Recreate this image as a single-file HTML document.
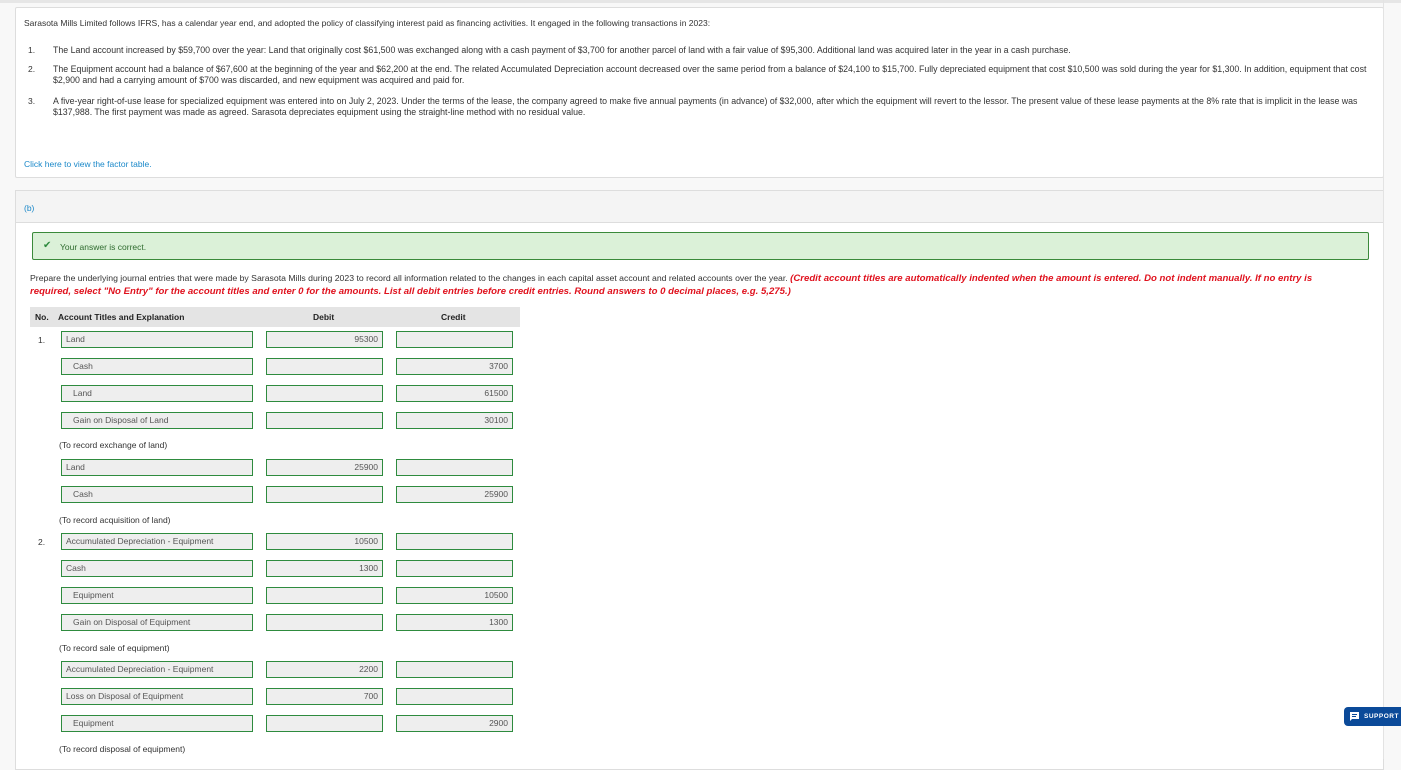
<!DOCTYPE html>
<html><head><meta charset="utf-8"><style>
*{box-sizing:border-box;margin:0;padding:0}
body{width:1401px;height:759px;overflow:hidden;background:#f8f8f8;font-family:"Liberation Sans",sans-serif;color:#333;position:relative;font-size:8.5px}
.top{position:absolute;left:0;top:0;width:1401px;height:3px;background:#e6e6e6}
.p1{position:absolute;left:15px;top:7px;width:1369px;height:171px;background:#fff;border:1px solid #ddd;border-radius:2px}
.p2{position:absolute;left:15px;top:190px;width:1369px;height:580px;background:#fff;border:1px solid #ddd}
.abs{position:absolute;white-space:nowrap}
.hd{position:absolute;left:0;top:0;width:100%;height:32px;background:#f4f4f4;border-bottom:1px solid #ddd}
.ok{position:absolute;left:16px;top:41px;width:1337px;height:28px;background:#dbf1d8;border:1px solid #3a8a3a;border-radius:2px}
.in{position:absolute;height:17px;border:1px solid #2e8b3e;background:#eee;font-size:8.5px;color:#555;line-height:15px;padding:0 4px}
.r{text-align:right}
.red{color:#e0121e;font-weight:bold;font-style:italic;font-size:9.6px}
.sup{position:absolute;left:1344px;top:707px;width:57px;height:19px;background:#0b4a99;border-radius:4px 0 0 4px;color:#fff;font-size:6.5px;font-weight:bold;letter-spacing:.5px;line-height:19px;padding-left:20px}
.vl{position:absolute;left:1383px;top:0;width:1px;height:759px;background:#e3e3e3}
.li{font-size:8.8px}
</style></head><body>
<div class="top"></div>
<div class="p1">
<div class="abs" style="left:8px;top:10px">Sarasota Mills Limited follows IFRS, has a calendar year end, and adopted the policy of classifying interest paid as financing activities. It engaged in the following transactions in 2023:</div>
<div class="abs" style="left:12px;top:37px">1.</div>
<div class="abs li" style="left:37px;top:37px">The Land account increased by $59,700 over the year: Land that originally cost $61,500 was exchanged along with a cash payment of $3,700 for another parcel of land with a fair value of $95,300. Additional land was acquired later in the year in a cash purchase.</div>
<div class="abs" style="left:12px;top:56px">2.</div>
<div class="abs li" style="left:37px;top:56px;line-height:11px">The Equipment account had a balance of $67,600 at the beginning of the year and $62,200 at the end. The related Accumulated Depreciation account decreased over the same period from a balance of $24,100 to $15,700. Fully depreciated equipment that cost $10,500 was sold during the year for $1,300. In addition, equipment that cost<br>$2,900 and had a carrying amount of $700 was discarded, and new equipment was acquired and paid for.</div>
<div class="abs" style="left:12px;top:88px">3.</div>
<div class="abs li" style="left:37px;top:88px;line-height:11px">A five-year right-of-use lease for specialized equipment was entered into on July 2, 2023. Under the terms of the lease, the company agreed to make five annual payments (in advance) of $32,000, after which the equipment will revert to the lessor. The present value of these lease payments at the 8% rate that is implicit in the lease was<br>$137,988. The first payment was made as agreed. Sarasota depreciates equipment using the straight-line method with no residual value.</div>
<div class="abs" style="left:8px;top:151px;color:#1a88c9">Click here to view the factor table.</div>
</div>
<div class="p2">
<div class="hd"><div class="abs" style="left:8px;top:12px;color:#1a88c9">(b)</div></div>
<div class="ok"><div class="abs" style="left:10px;top:7px;color:#2e8b3e;font-size:10px">✔</div><div class="abs" style="left:27px;top:9px;color:#2e6b2e">Your answer is correct.</div></div>
<div class="abs" style="left:14px;top:81px;line-height:12px;font-size:8.7px">Prepare the underlying journal entries that were made by Sarasota Mills during 2023 to record all information related to the changes in each capital asset account and related accounts over the year. <span class="red">(Credit account titles are automatically indented when the amount is entered. Do not indent manually. If no entry is</span><br><span class="red">required, select "No Entry" for the account titles and enter 0 for the amounts. List all debit entries before credit entries. Round answers to 0 decimal places, e.g. 5,275.)</span></div>
<div class="abs" style="left:14px;top:116px;width:490px;height:20px;background:#e4e4e4;font-weight:bold;font-size:8.5px;line-height:20px;color:#222">
<span class="abs" style="left:5px">No.</span><span class="abs" style="left:28px">Account Titles and Explanation</span><span class="abs" style="left:283px">Debit</span><span class="abs" style="left:411px">Credit</span></div>
</div>
<div class="abs" style="left:38px;top:335px">1.</div>
<div class="abs" style="left:38px;top:537px">2.</div>
<div class="in" style="left:61px;top:331px;width:192px">Land</div><div class="in r" style="left:266px;top:331px;width:117px">95300</div><div class="in" style="left:396px;top:331px;width:117px"></div>
<div class="in" style="left:61px;top:358px;width:192px;padding-left:11px">Cash</div><div class="in" style="left:266px;top:358px;width:117px"></div><div class="in r" style="left:396px;top:358px;width:117px">3700</div>
<div class="in" style="left:61px;top:385px;width:192px;padding-left:11px">Land</div><div class="in" style="left:266px;top:385px;width:117px"></div><div class="in r" style="left:396px;top:385px;width:117px">61500</div>
<div class="in" style="left:61px;top:412px;width:192px;padding-left:11px">Gain on Disposal of Land</div><div class="in" style="left:266px;top:412px;width:117px"></div><div class="in r" style="left:396px;top:412px;width:117px">30100</div>
<div class="abs" style="left:59px;top:440px">(To record exchange of land)</div>
<div class="in" style="left:61px;top:459px;width:192px">Land</div><div class="in r" style="left:266px;top:459px;width:117px">25900</div><div class="in" style="left:396px;top:459px;width:117px"></div>
<div class="in" style="left:61px;top:486px;width:192px;padding-left:11px">Cash</div><div class="in" style="left:266px;top:486px;width:117px"></div><div class="in r" style="left:396px;top:486px;width:117px">25900</div>
<div class="abs" style="left:59px;top:515px">(To record acquisition of land)</div>
<div class="in" style="left:61px;top:533px;width:192px">Accumulated Depreciation - Equipment</div><div class="in r" style="left:266px;top:533px;width:117px">10500</div><div class="in" style="left:396px;top:533px;width:117px"></div>
<div class="in" style="left:61px;top:560px;width:192px">Cash</div><div class="in r" style="left:266px;top:560px;width:117px">1300</div><div class="in" style="left:396px;top:560px;width:117px"></div>
<div class="in" style="left:61px;top:587px;width:192px;padding-left:11px">Equipment</div><div class="in" style="left:266px;top:587px;width:117px"></div><div class="in r" style="left:396px;top:587px;width:117px">10500</div>
<div class="in" style="left:61px;top:614px;width:192px;padding-left:11px">Gain on Disposal of Equipment</div><div class="in" style="left:266px;top:614px;width:117px"></div><div class="in r" style="left:396px;top:614px;width:117px">1300</div>
<div class="abs" style="left:59px;top:643px">(To record sale of equipment)</div>
<div class="in" style="left:61px;top:661px;width:192px">Accumulated Depreciation - Equipment</div><div class="in r" style="left:266px;top:661px;width:117px">2200</div><div class="in" style="left:396px;top:661px;width:117px"></div>
<div class="in" style="left:61px;top:688px;width:192px">Loss on Disposal of Equipment</div><div class="in r" style="left:266px;top:688px;width:117px">700</div><div class="in" style="left:396px;top:688px;width:117px"></div>
<div class="in" style="left:61px;top:715px;width:192px;padding-left:11px">Equipment</div><div class="in" style="left:266px;top:715px;width:117px"></div><div class="in r" style="left:396px;top:715px;width:117px">2900</div>
<div class="abs" style="left:59px;top:744px">(To record disposal of equipment)</div>
<div class="vl"></div>
<div class="sup"><svg style="position:absolute;left:5px;top:4px" width="11" height="11" viewBox="0 0 11 11"><path d="M1 1h9v7H3l-2 2z" fill="#fff"/><path d="M3 3.5h5M3 5.5h4" stroke="#0b4a99" stroke-width="1"/></svg>SUPPORT</div>
</body></html>
